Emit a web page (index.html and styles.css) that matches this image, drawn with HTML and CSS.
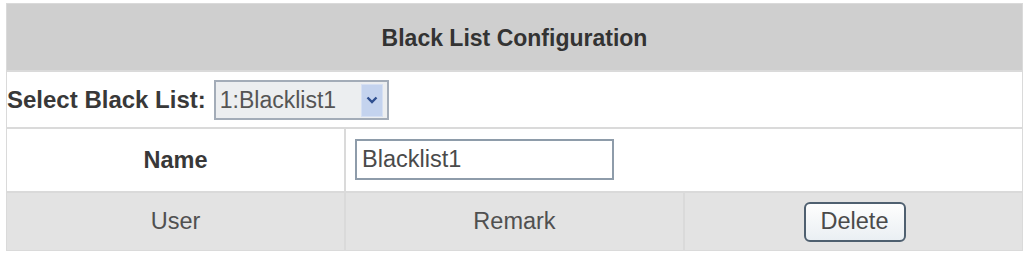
FILE: index.html
```html
<!DOCTYPE html>
<html>
<head>
<meta charset="utf-8">
<link rel="stylesheet" href="styles.css">
</head>
<body>
<div class="config">
  <div class="cell head span3">Black List Configuration</div>
  <div class="cell select-row span3">
    <span class="label">Select Black List:</span>
    <div class="select">
      <span class="select-text">1:Blacklist1</span>
      <span class="select-arrow">
        <svg width="12" height="8" viewBox="0 0 12 8"><path d="M1.5 1.5 L6 6 L10.5 1.5" fill="none" stroke="#2f4f8f" stroke-width="2.4"/></svg>
      </span>
    </div>
  </div>
  <div class="cell name-label">Name</div>
  <div class="cell name-input span2"><input class="text" type="text" value="Blacklist1"></div>
  <div class="cell foot">User</div>
  <div class="cell foot">Remark</div>
  <div class="cell foot"><button class="btn">Delete</button></div>
</div>
</body>
</html>
```
FILE: styles.css
```css
html, body {
  margin: 0;
  padding: 0;
  background: #ffffff;
}
body {
  padding: 3px 6px 0 6px;
  font-family: "Liberation Sans", Arial, sans-serif;
  font-size: 23.5px;
  color: #505050;
}
.config {
  display: grid;
  grid-template-columns: 1fr 1fr 1fr;
  grid-template-rows: 66px 55px 62px 57px;
  gap: 2px;
  padding: 1px;
  background: #dadada;
  width: 1017px;
  box-sizing: border-box;
}
.cell {
  background: #ffffff;
  display: flex;
  align-items: center;
}
.span3 { grid-column: span 3; }
.span2 { grid-column: span 2; }
.head {
  background: #cfcfcf;
  justify-content: center;
  font-weight: bold;
  color: #333333;
  font-size: 23px;
  padding-top: 2px;
}
.select-row {
  padding-left: 0;
}
.label {
  font-weight: bold;
  color: #383838;
  font-size: 24px;
  margin-right: 8px;
}
.select {
  display: flex;
  align-items: center;
  width: 175px;
  height: 40px;
  box-sizing: border-box;
  border: 2px solid #a3acb8;
  background: #eceef0;
  padding: 0 4px 0 4px;
  margin-top: 1px;
}
.select-text {
  flex: 1;
  color: #555555;
  font-size: 23px;
}
.select-arrow {
  width: 22px;
  height: 33px;
  background: #c4d3ee;
  border: 1px solid #d6e0f3;
  box-sizing: border-box;
  display: flex;
  align-items: center;
  justify-content: center;
}
.name-label {
  justify-content: center;
  font-weight: bold;
  color: #383838;
}
.name-input {
  padding-left: 9px;
}
.text {
  width: 259px;
  height: 41px;
  box-sizing: border-box;
  border: 2px solid #8e9caa;
  padding: 0 0 0 5px;
  font-family: "Liberation Sans", Arial, sans-serif;
  font-size: 23.5px;
  color: #4a4a4a;
  background: #ffffff;
  margin-top: -1px;
}
.foot {
  background: #e3e3e3;
  justify-content: center;
}
.btn {
  width: 102px;
  height: 40px;
  border: 2px solid #4f6070;
  border-radius: 6px;
  background: linear-gradient(#fefefe, #eaeff3);
  font-family: "Liberation Sans", Arial, sans-serif;
  font-size: 23.5px;
  color: #4a4a4a;
  padding: 0;
  margin-left: 2px;
}
```
